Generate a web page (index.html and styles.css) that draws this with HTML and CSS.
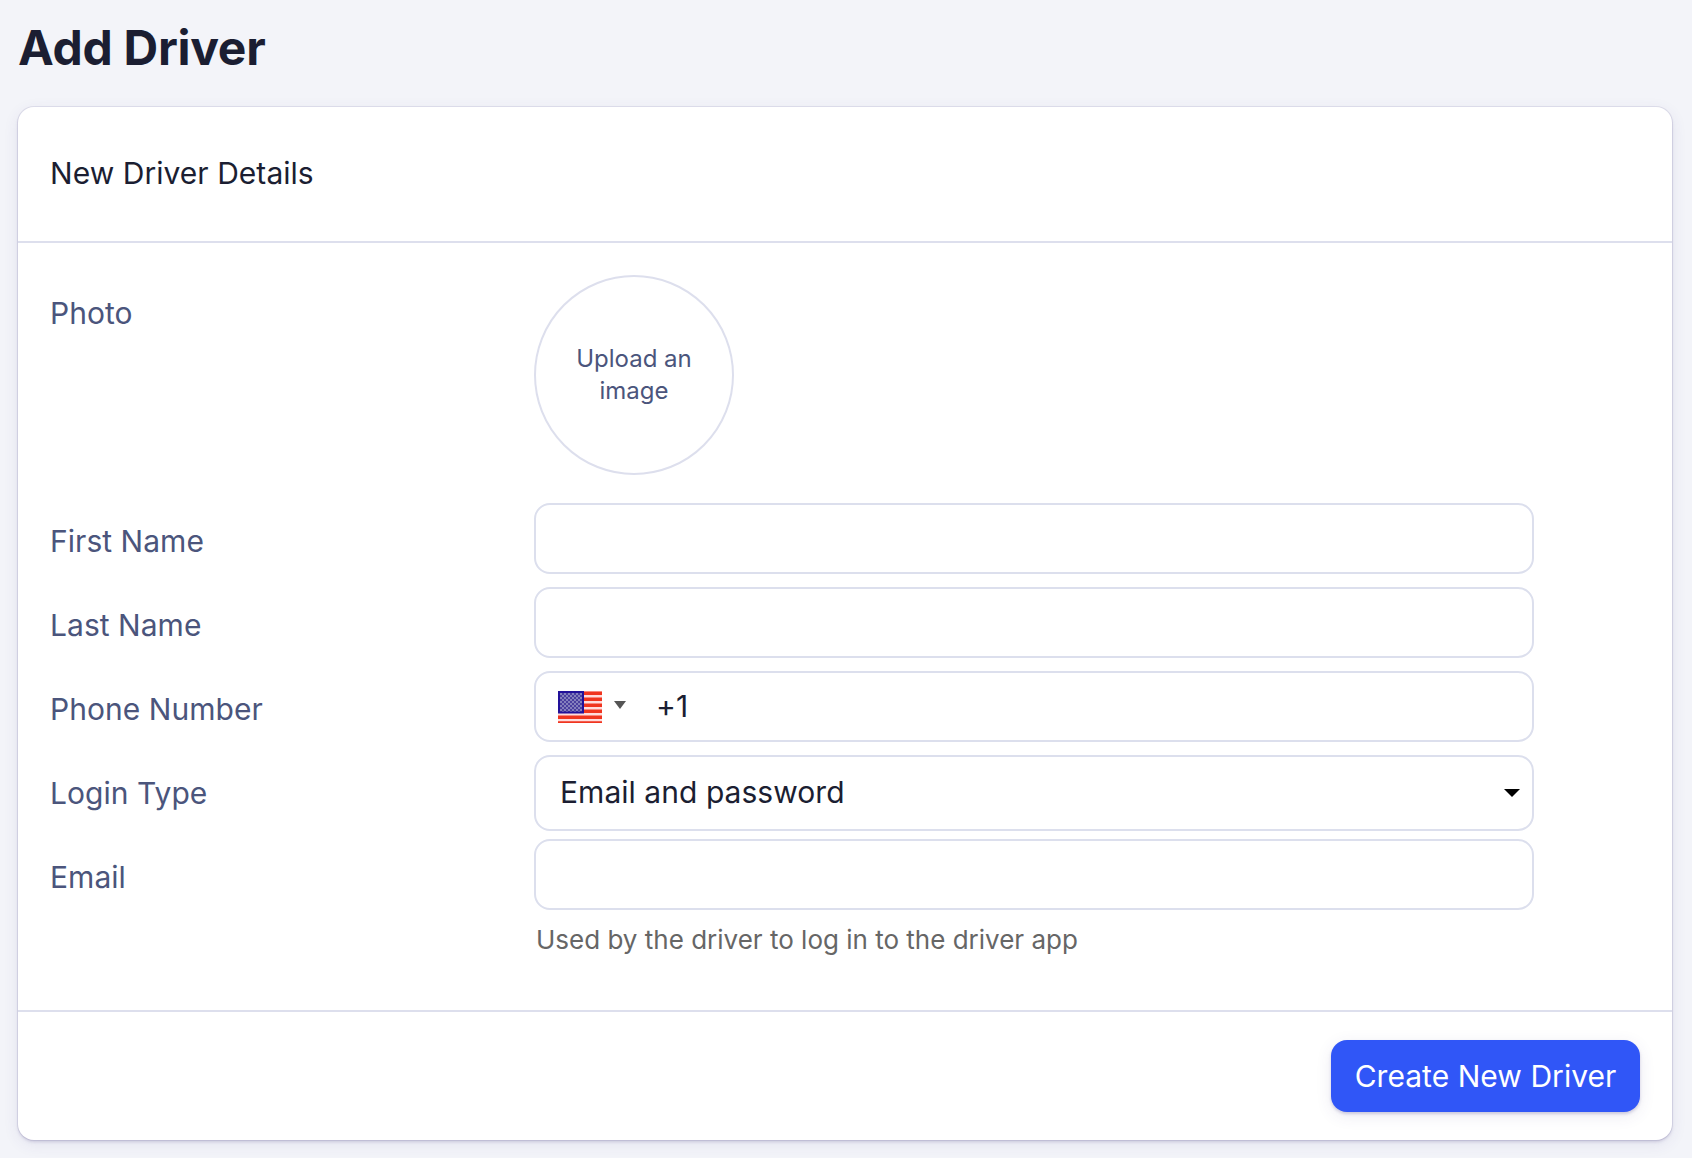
FILE: index.html
```html
<!DOCTYPE html>
<html lang="en">
<head>
<meta charset="utf-8">
<title>Add Driver</title>
<link rel="stylesheet" href="styles.css">
</head>
<body>
<h1>Add Driver</h1>
<form class="card">
  <h2 class="card-head">New Driver Details</h2>
  <div class="card-body">
    <div class="row row-photo"><span class="label">Photo</span><button type="button" class="upload">Upload an image</button></div>
    <label class="row"><span class="label">First Name</span><input class="field"></label>
    <label class="row"><span class="label">Last Name</span><input class="field"></label>
    <div class="row"><span class="label">Phone Number</span>
      <div class="field phone">
        <svg class="flag" width="44" height="32" viewBox="0 0 44 32">
          <defs><pattern id="stars" width="4" height="4" patternUnits="userSpaceOnUse"><path fill="#8480bd" d="M0 0h2v2H0zM2 2h2v2H2z"/></pattern></defs>
          <path fill="#ffdcdc" d="M0 0h44v32H0z"/>
          <path stroke="#f0351f" stroke-width="3.5" d="M0 2.3h44M0 8.3h44M0 14.2h44M0 20.2h44M0 26.2h44M0 32h44"/>
          <path fill="#22119a" d="M0 0h26v22.500H0z"/>
          <path fill="#4a409f" d="M2 2h22v18.500H2z"/>
          <path fill="url(#stars)" d="M2 2h22v18.500H2z"/>
        </svg>
        <svg class="caret" width="12" height="8" viewBox="0 0 12 8"><path fill="#555" d="M0 0h12L6 8z"/></svg>
        <span class="code">+1</span>
      </div>
    </div>
    <div class="row"><span class="label">Login Type</span>
      <div class="field select"><span class="value">Email and password</span><svg width="16" height="8" viewBox="0 0 16 8"><path d="M0 0h16L8 8z"/></svg></div>
    </div>
    <label class="row"><span class="label">Email</span><input class="field"></label>
    <p class="hint">Used by the driver to log in to the driver app</p>
  </div>
  <div class="card-foot"><button type="button" class="submit">Create New Driver</button></div>
</form>
</body>
</html>
```
FILE: styles.css
```css
* { box-sizing: border-box; }
body { margin: 0; min-height: 100vh; padding: 18px 20px 0 18px; background: #f3f4f9; color: #1b1e32; font: 30px/40px Inter, sans-serif; letter-spacing: .04px; }
h1 { margin: 0 0 29px; font-size: 48px; line-height: 60px; font-weight: 700; letter-spacing: -.28px; }
.card { height: 1033px; background: #fff; border-radius: 16px; box-shadow: 0 0 0 1px rgba(70, 60, 130, .1), 0 2px 3px rgba(70, 60, 130, .18), 0 4px 16px rgba(70, 60, 130, .09); }
.card-head { margin: 0; height: 136px; padding: 46px 32px; border-bottom: 2px solid #dddfed; font-size: 30px; font-weight: 400; }
.card-body { height: 767px; padding: 32px; }
.row { display: grid; grid-template-columns: 484px 1000px; height: 84px; }
.row-photo { height: 228px; }
.label { padding-top: 18px; color: #4b557c; }
.field { width: 1000px; height: 71px; border: 2px solid #dcdfed; border-radius: 16px; background: #fff; outline: none; }
.upload { width: 200px; height: 200px; padding: 0 38px; border: 2px solid #dddfed; border-radius: 50%; background: #fff; color: #4b557c; font: 24px/32px Inter, sans-serif; }
.phone { display: flex; align-items: center; padding-left: 22px; }
.caret { margin: 0 30px 4px 12px; }
.code, .value { padding-bottom: 2px; }
.select { display: flex; align-items: center; justify-content: space-between; height: 76px; padding: 0 12px 0 24px; }
.hint { margin: -1px 0 0 486px; color: #666; font-size: 26px; line-height: 36px; letter-spacing: 0; }
.card-foot { display: flex; justify-content: flex-end; height: 130px; padding: 28px 32px; border-top: 2px solid #dddfed; }
.submit { width: 309px; height: 72px; padding: 0; border: 0; border-radius: 16px; background: #3056f7; color: #fff; font: 30px/40px Inter, sans-serif; letter-spacing: .04px; box-shadow: 0 2px 3px rgba(70, 60, 130, .22), 0 4px 16px rgba(70, 60, 130, .1); }
```
